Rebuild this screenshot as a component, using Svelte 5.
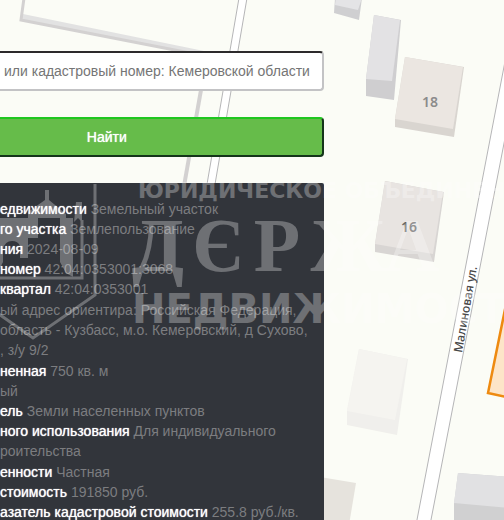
<script lang="ts">
  type Row = { label?: string; value: string };

  const groups: Row[][] = [
    [
      { label: 'едвижимости', value: 'Земельный участок' },
      { label: 'го участка', value: 'Землепользование' },
      { label: 'ния', value: '2024-08-09' },
      { label: 'номер', value: '42:04:0353001:3068' },
      { label: 'квартал', value: '42:04:0353001' }
    ],
    [
      { value: 'ый адрес ориентира: Российская Федерация,' },
      { value: 'область - Кузбасс, м.о. Кемеровский, д Сухово,' },
      { value: ', з/у 9/2' }
    ],
    [
      { label: 'ненная', value: '750 кв. м' },
      { value: 'ый' },
      { label: 'ель', value: 'Земли населенных пунктов' },
      { label: 'ного использования', value: 'Для индивидуального' },
      { value: 'роительства' }
    ],
    [
      { label: 'енности', value: 'Частная' },
      { label: 'стоимость', value: '191850 руб.' },
      { label: 'азатель кадастровой стоимости', value: '255.8 руб./кв.' }
    ]
  ];

  /** Wordmark letters stand on their own grid */
  const wordmark = [
    { letter: 'Д', x: 158 },
    { letter: 'Є', x: 218 },
    { letter: 'Р', x: 277 },
    { letter: 'Ж', x: 348 },
    { letter: 'А', x: 412 }
  ];

  let query = $state('');
</script>

<main class="page">
  <svg class="map" viewBox="0 0 504 520" preserveAspectRatio="xMinYMin slice" aria-hidden="true">
    <rect width="504" height="520" fill="#fbfcf6" />

    <!-- fences -->
    <g fill="none" stroke="#d3d1d1">
      <path d="M21 20L23 14L204 51L190 53Z" fill="#e2e2e2" stroke="none" />
      <path d="M24 -2L21 20L190 53" stroke-width="3" />
      <path d="M201 90L184 186" stroke-width="4" />
    </g>

    <!-- roads -->
    <g fill="#fff" stroke="#b5b5b7">
      <path d="M239 -2L206 190L214 190L247 -2Z" />
      <path d="M512 25L416 525L430 525L525 35Z" />
    </g>

    <!-- buildings -->
    <g>
      <path d="M335 -2L334 13L359 20L362 -2Z" fill="#cfcfd1" />
      <path d="M336 -2L335 5L358 10L362 -2Z" fill="#e4e4e6" />
      <path d="M374 15L401 20L394 100L366 96V79Z" fill="#cfced0" />
      <path d="M374 15L400 20L392 81L366 79Z" fill="#e3e2e4" />
      <path d="M405 57L464 67L454 137L395 127V119Z" fill="#d9d5d0" />
      <path d="M405 57L463 67L453 129L395 119Z" fill="#ebe6e1" />
      <path d="M385 181L444 192L434 262L375 252V244Z" fill="#d8d5d3" />
      <path d="M385 181L443 192L433 254L375 244Z" fill="#e8e4e1" />
      <path d="M359 349L408 359L397 435L347 425V411Z" fill="#f0efec" />
      <path d="M359 349L407 359L395 420L347 411Z" fill="#f5f4f0" />
      <path d="M320 477L356 483L349 525H320Z" fill="#e6e3dd" />
      <path d="M458 473L510 477V525H454V504Z" fill="#d0d0d1" />
      <path d="M458 473L510 477V508L454 503Z" fill="#e1e1e3" />
    </g>

    <path d="M511 280L488 393L511 398Z" fill="#fde5c8" stroke="#ee8a10" stroke-width="2.5" />

    <g class="numbers">
      <text x="430" y="107">18</text>
      <text class="dark" x="409" y="232">16</text>
    </g>
    <text class="street" transform="translate(462 353) rotate(-80)">Малиновая ул.</text>
  </svg>

  <div class="sidebar">
    <form onsubmit={e => e.preventDefault()}>
      <input
        type="text"
        aria-label="Кадастровый номер"
        placeholder="или кадастровый номер: Кемеровской области"
        bind:value={query} />
      <button type="submit">Найти</button>
    </form>

    <section class="details">
      {#each groups as rows}
        <div class="group">
          {#each rows as { label, value }}
            <p>{#if label}<b>{label}</b>{' '}{/if}{value}</p>
          {/each}
        </div>
      {/each}
    </section>
  </div>

  <svg class="watermark" viewBox="0 0 504 520" preserveAspectRatio="xMinYMin slice" aria-hidden="true">
    <g fill="none" stroke="#fff" stroke-width="3">
      <path d="M95 184V295L33 338L-4 312" />
      <path d="M-2 278H82V220" />
    </g>
    <g fill="#fff">
      <path d="M0 218H28V212L45 200V190H49V200L66 214V218H73V277L66 273L60 262V218H38V238H28V258H20V246Q18 241 12 241Q5 241 3 249V262L0 268Z" />
      <path d="M76 202H82V222L78 218L74 222Z" />
    </g>
    <text class="small" x="138" y="198">ЮРИДИЧЕСКОЕ ОБЪЕДИНЕНИЕ</text>
    {#each wordmark as { letter, x }}
      <text class="large" {x} y="271">{letter}</text>
    {/each}
    <text class="medium" x="132" y="323">НЕДВИЖИМОСТЬ</text>
  </svg>
</main>

<style>
  :global(body) {
    margin: 0;
    background: #fbfcf6;
  }

  .page {
    position: relative;
    height: 100vh;
    overflow: hidden;
    font-family: "Liberation Sans", Arial, sans-serif;
    font-size: 14px;
  }

  .map,
  .watermark {
    position: absolute;
    top: 0;
    left: 0;
    width: 100%;
    height: 100%;
  }

  .numbers text {
    fill: #8b8b8b;
    font-family: "Noto Sans", sans-serif;
    font-size: 14px;
    font-weight: 600;
    text-anchor: middle;
  }

  .numbers .dark {
    fill: #666;
  }

  .street {
    fill: #484848;
    font-family: "Noto Sans", sans-serif;
    font-size: 12px;
    font-weight: 500;
  }

  .sidebar {
    position: relative;
    box-sizing: border-box;
    width: 64.2%;
    padding-top: 51px;
  }

  form {
    display: flex;
    flex-direction: column;
    gap: 26px;
    margin-bottom: 26px;
  }

  input,
  button {
    box-sizing: border-box;
    width: 100%;
    height: 40px;
    margin: 0;
    border-style: solid;
    border-width: 2px 2px 2px 0;
    border-radius: 0 4px 4px 0;
    font-family: inherit;
    font-size: 14px;
  }

  input {
    padding: 0 4px;
    background: #fff;
    border-color: #2c2a2b #c3c3c5 #c3c3c5;
  }

  input::placeholder {
    color: #757575;
    opacity: 1;
  }

  button {
    padding: 0 108px 0 0;
    background: #66bc4a;
    border-color: #1fc71f #14351a #14351a;
    color: #fff;
    text-shadow: 0 0 1px #fff;
  }

  .details {
    display: flex;
    flex-direction: column;
    gap: 1px;
    padding-top: 16px;
    background: #32353b;
    border-radius: 0 2px 0 0;
    color: #7c7d80;
    line-height: 20px;
    white-space: nowrap;
  }

  p {
    margin: 0;
  }

  b {
    color: #fff;
    font-weight: 400;
    text-shadow: 0 0 1px #fff;
  }

  .watermark {
    opacity: 0.29;
    pointer-events: none;
  }

  .watermark text {
    fill: #fff;
    font-family: "DejaVu Sans", sans-serif;
    font-weight: 700;
  }

  .watermark .small {
    font-size: 22px;
  }

  .watermark .medium {
    font-size: 40px;
  }

  .watermark .large {
    font-family: "Liberation Serif", serif;
    font-size: 76px;
    text-anchor: middle;
  }
</style>
